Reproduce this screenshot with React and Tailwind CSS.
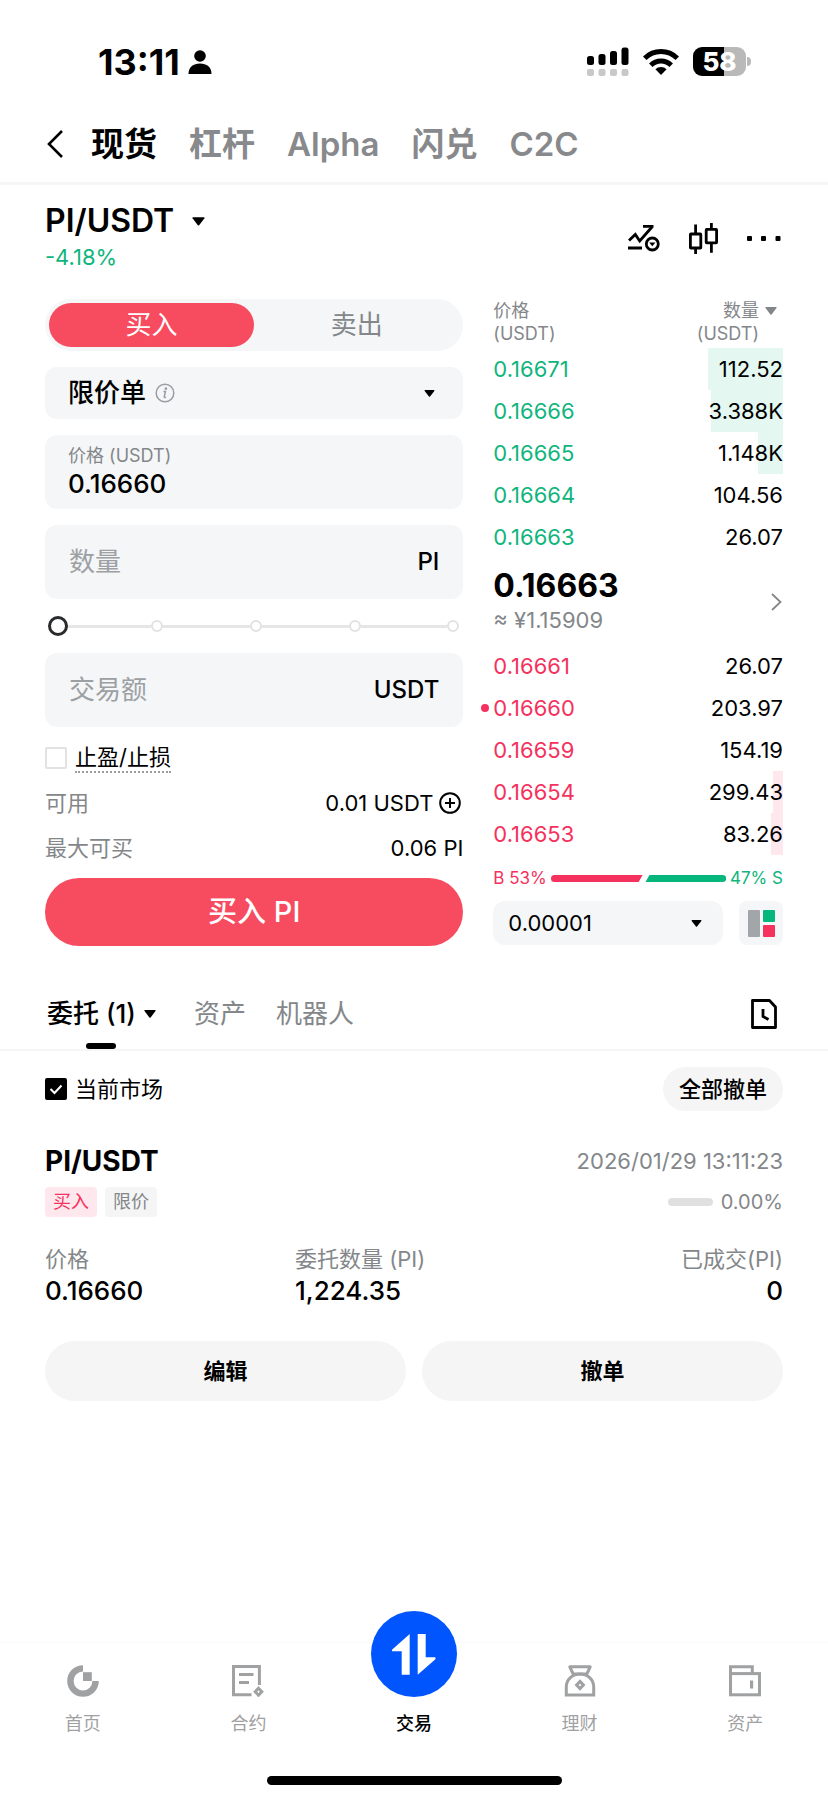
import React, { useState } from "react";

const bids = [
  { price: "0.16671", amount: "112.52", depth: 26 },
  { price: "0.16666", amount: "3.388K", depth: 25 },
  { price: "0.16665", amount: "1.148K", depth: 8.5 },
  { price: "0.16664", amount: "104.56", depth: 0 },
  { price: "0.16663", amount: "26.07", depth: 0 },
];

const asks = [
  { price: "0.16661", amount: "26.07", depth: 0 },
  { price: "0.16660", amount: "203.97", depth: 0, mine: true },
  { price: "0.16659", amount: "154.19", depth: 0 },
  { price: "0.16654", amount: "299.43", depth: 3.5 },
  { price: "0.16653", amount: "83.26", depth: 4 },
];

const Caret = ({ className }) => (
  <svg viewBox="0 0 12 8" className={`shrink-0 ${className}`} fill="currentColor" aria-hidden="true">
    <path d="M1 0h10q1 0.2 0.5 1L6.6 7.4q-0.6 0.7-1.2 0L0.5 1Q0 0.2 1 0z" />
  </svg>
);

const StatusBar = () => (
  <div className="flex h-[105px] items-center justify-between pt-[18px] pr-[77px] pl-[98px]">
    <div className="flex items-center gap-2">
      <span className="text-[36px] leading-none font-bold">13:11</span>
      <svg viewBox="0 0 24 24" className="h-6 w-6" fill="currentColor">
        <circle cx="12" cy="6" r="5.8" />
        <path d="M0.5 24C0.5 17 5.5 13.6 12 13.6S23.5 17 23.5 24z" />
      </svg>
    </div>
    <div className="flex items-center gap-3.5">
      <svg viewBox="0 0 42 30" className="h-[30px] w-[42px]">
        <g fill="#000">
          <rect x="0" y="9" width="7" height="9" rx="2.5" />
          <rect x="11.5" y="7" width="7" height="11" rx="2.5" />
          <rect x="23" y="4" width="7" height="14" rx="2.5" />
          <rect x="34.5" y="0.5" width="7" height="17.5" rx="2.5" />
        </g>
        <g fill="#c8c8c8">
          <rect x="0" y="22" width="7" height="7" rx="2" />
          <rect x="11.5" y="22" width="7" height="7" rx="2" />
          <rect x="23" y="22" width="7" height="7" rx="2" />
          <rect x="34.5" y="22" width="7" height="7" rx="2" />
        </g>
      </svg>
      <svg viewBox="0 0 36 27" className="h-[27px] w-9" fill="none" stroke="#000" strokeWidth="5">
        <path d="M1.7 10.3a23 23 0 0 1 32.6 0" />
        <path d="M7.8 17.2a14.4 14.4 0 0 1 20.4 0" />
        <path d="M18 27l-5.6-5.8a8 8 0 0 1 11.2 0z" fill="#000" stroke="none" />
      </svg>
      <div className="flex items-center gap-px">
        <div className="flex h-[29px] w-[53px] items-center justify-center rounded-[9px] bg-linear-to-r from-black from-58% to-[#b9b9b9] to-58% text-[26px] leading-none font-extrabold text-white">
          58
        </div>
        <div className="h-[9px] w-1 rounded-r-full bg-[#b9b9b9]"></div>
      </div>
    </div>
  </div>
);

const TopTabs = () => {
  const tabs = ["现货", "杠杆", "Alpha", "闪兑", "C2C"];
  return (
    <nav className="flex h-20 items-center border-b-[3px] border-[#f6f6f6] px-[45px]">
      <button aria-label="返回" className="mr-7">
        <svg viewBox="0 0 18 28" className="h-7 w-[18px]" fill="none" stroke="currentColor" strokeWidth="2.6">
          <path d="M17 1L4 14l13 13" />
        </svg>
      </button>
      <div className="flex gap-8">
        {tabs.map((tab, index) => (
          <a
            key={tab}
            href="#"
            className={`text-[33px] leading-10 ${index === 0 ? "font-bold text-black" : "font-semibold text-[#87898c]"}`}
          >
            {tab}
          </a>
        ))}
      </div>
    </nav>
  );
};

const PairHeader = () => (
  <div className="flex items-end justify-between pt-4">
    <div className="flex flex-col gap-0.5">
      <button className="flex items-center gap-[18px] text-[32px] leading-10 font-semibold">
        PI/USDT
        <Caret className="h-[9px] w-[13px]" />
      </button>
      <span className="text-[22px] leading-7 text-[#10b57d]">-4.18%</span>
    </div>
    <div className="mr-px flex h-[66px] items-center gap-[29px]">
      <button aria-label="行情提醒">
        <svg viewBox="0 0 32 28" className="h-7 w-8" fill="none" stroke="currentColor" strokeWidth="2.8">
          <path d="M1 16.5l6.3-6 4.4 6.5L24 3" />
          <path d="M15 2.3h10.5M0 24h14" />
          <circle cx="24.3" cy="20" r="6" />
          <path d="M21.2 18.6h6.2l-3.1 3.6z" fill="currentColor" stroke="none" />
        </svg>
      </button>
      <button aria-label="K线">
        <svg viewBox="0 0 29 31" className="h-[31px] w-[29px]" fill="none" stroke="currentColor" strokeWidth="2.8">
          <rect x="1.4" y="11" width="10.4" height="14" rx="0.5" />
          <path d="M6.6 1.5V11M6.6 25v6" />
          <rect x="17.2" y="6.4" width="10.4" height="13.4" rx="0.5" />
          <path d="M22.4 0v6.4M22.4 19.8v10" />
        </svg>
      </button>
      <button aria-label="更多">
        <svg viewBox="0 0 35 5" className="h-[5px] w-[35px]" fill="currentColor">
          <rect x="0" width="5" height="5" rx="1" />
          <rect x="14" width="5" height="5" rx="1" />
          <rect x="28.5" width="5" height="5" rx="1" />
        </svg>
      </button>
    </div>
  </div>
);

const OrderForm = () => {
  const [price, setPrice] = useState("0.16660");
  const [percent, setPercent] = useState(0);

  return (
    <form className="flex min-w-0 flex-col" onSubmit={(e) => e.preventDefault()}>
      <div className="grid h-[52px] grid-cols-2 rounded-full bg-[#f4f6f8] p-1 text-[26px] leading-8">
        <button type="button" className="rounded-full bg-[#f74b60] text-white">
          买入
        </button>
        <button type="button" className="rounded-full text-[#84878a]">
          卖出
        </button>
      </div>

      <div className="mt-4 flex h-[52px] items-center rounded-xl bg-[#f4f6f8] pr-7 pl-[23px]">
        <select aria-label="委托类型" className="appearance-none bg-transparent text-[26px] leading-8 font-medium">
          <option>限价单</option>
        </select>
        <svg viewBox="0 0 20 20" className="ml-2 h-5 w-5" fill="none" stroke="#9a9c9f" strokeWidth="1.5">
          <circle cx="10" cy="10" r="8.8" />
          <path d="M8.4 8.6h2L9.2 14q0 0.9 1.8 0.2" />
          <circle cx="10.9" cy="5.7" r="0.6" fill="#9a9c9f" />
        </svg>
        <Caret className="ml-auto h-[7px] w-[11px]" />
      </div>

      <label className="mt-4 flex h-[74px] flex-col justify-center rounded-xl bg-[#f4f6f8] px-[23px]">
        <span className="text-[18px] leading-6 text-[#84878a]">价格 (USDT)</span>
        <input
          value={price}
          onChange={(e) => setPrice(e.target.value)}
          className="h-8 w-full bg-transparent text-[26px] leading-8 font-medium outline-none"
        />
      </label>

      <label className="mt-4 flex h-[74px] items-center rounded-xl bg-[#f4f6f8] px-6 text-[24px] leading-8 font-medium">
        <input
          placeholder="数量"
          className="min-w-0 flex-1 bg-transparent text-[26px] font-normal outline-none placeholder:text-[#9da0a3]"
        />
        PI
      </label>

      {/* Amount slider with five stops */}
      <div className="relative flex h-[54px] items-center pl-[3px]">
        <div className="flex flex-1 items-center">
          <span className="relative h-5 w-5 shrink-0 rounded-full border-[3px] border-[#2a2b2d] bg-white"></span>
          {[25, 50, 75, 100].map((stop) => (
            <React.Fragment key={stop}>
              <span className="-mx-1 h-[3px] flex-1 bg-[#e6e6e6]"></span>
              <span className="flex w-5 shrink-0 justify-center">
                <span className="h-3 w-3 rounded-full border-2 border-[#e2e2e2]"></span>
              </span>
            </React.Fragment>
          ))}
        </div>
        <input
          type="range"
          aria-label="数量比例"
          min="0"
          max="100"
          value={percent}
          onChange={(e) => setPercent(Number(e.target.value))}
          className="absolute inset-0 w-full opacity-0"
        />
      </div>

      <label className="flex h-[74px] items-center rounded-xl bg-[#f4f6f8] px-6 text-[24px] leading-8 font-medium">
        <input
          placeholder="交易额"
          className="min-w-0 flex-1 bg-transparent text-[26px] font-normal outline-none placeholder:text-[#9da0a3]"
        />
        USDT
      </label>

      <div className="flex flex-col py-2 text-[22px] leading-7">
        <label className="flex h-[45px] items-center gap-2">
          <input type="checkbox" className="h-[22px] w-[22px] appearance-none rounded-xs border-2 border-[#e2e2e2] bg-white" />
          <span className="border-b-2 border-dotted border-[#9a9c9f]">止盈/止损</span>
        </label>
        <div className="flex h-[45px] items-center justify-between">
          <span className="text-[#84878a]">可用</span>
          <span className="mr-0.5 flex items-center gap-1.5">
            0.01 USDT
            <button type="button" aria-label="充值">
              <svg viewBox="0 0 22 22" className="h-[22px] w-[22px]" fill="none" stroke="currentColor" strokeWidth="2">
                <circle cx="11" cy="11" r="9.8" />
                <path d="M11 6v10M6 11h10" />
              </svg>
            </button>
          </span>
        </div>
        <div className="flex h-[45px] items-center justify-between">
          <span className="text-[#84878a]">最大可买</span>
          <span>0.06 PI</span>
        </div>
      </div>

      <button type="submit" className="h-[68px] rounded-full bg-[#f74b60] text-[29px] leading-9 font-medium text-white">
        买入 PI
      </button>
    </form>
  );
};

const BookRow = ({ row, priceColor, depthColor }) => (
  <tr className="relative h-[42px]">
    <td className={`relative p-0 ${priceColor}`}>
      {row.mine && <span className="absolute top-[17px] -left-3 h-2 w-2 rounded-full bg-[#f5315d]"></span>}
      {row.price}
    </td>
    <td className="p-0 text-right">
      <span className={`absolute inset-y-0 right-0 ${depthColor}`} style={{ width: `${row.depth}%` }}></span>
      <span className="relative">{row.amount}</span>
    </td>
  </tr>
);

const OrderBook = () => (
  <div className="flex min-w-0 flex-col">
    <table className="w-full border-collapse text-[22px] leading-7">
      <thead>
        <tr className="h-[49px] align-top text-[18px] leading-[23px] text-[#84878a]">
          <th className="p-0 text-left font-normal">
            价格
            <br />
            (USDT)
          </th>
          <th className="p-0 font-normal">
            <div className="flex justify-end gap-1.5 pr-1.5 text-right">
              <span>
                数量
                <br />
                (USDT)
              </span>
              <Caret className="mt-2 h-2 w-3" />
            </div>
          </th>
        </tr>
      </thead>
      <tbody>
        {bids.map((row) => (
          <BookRow key={row.price} row={row} priceColor="text-[#10b57d]" depthColor="bg-[#e4f8f1]" />
        ))}
        <tr className="h-[87px]">
          <td colSpan={2} className="p-0">
            <div className="flex items-center justify-between">
              <div>
                <p className="text-[32px] leading-9 font-bold">0.16663</p>
                <p className="text-[22px] leading-8 text-[#84878a]">≈ ¥1.15909</p>
              </div>
              <svg viewBox="0 0 11 18" className="mr-px h-[18px] w-[11px]" fill="none" stroke="#84878a" strokeWidth="1.8">
                <path d="M1 1l8.5 8L1 17" />
              </svg>
            </div>
          </td>
        </tr>
        {asks.map((row) => (
          <BookRow key={row.price} row={row} priceColor="text-[#f5315d]" depthColor="bg-[#fee8ed]" />
        ))}
      </tbody>
    </table>

    <div className="flex h-[46px] items-center gap-1 text-[17px] leading-6">
      <span className="text-[#f5315d]">B 53%</span>
      <svg viewBox="0 0 178 7" preserveAspectRatio="none" className="h-[7px] min-w-0 flex-1">
        <path d="M3.5 0H93l-4 7H3.5a3.5 3.5 0 0 1 0-7z" fill="#f5315d" />
        <path d="M100 0h74.5a3.5 3.5 0 0 1 0 7H96z" fill="#06b77d" />
      </svg>
      <span className="text-[#10b57d]">47% S</span>
    </div>

    <div className="flex gap-4">
      <div className="flex h-11 flex-1 items-center justify-between rounded-xl bg-[#f4f6f8] pr-[21px] pl-[15px]">
        <select aria-label="价格精度" className="appearance-none bg-transparent text-[22px] leading-7">
          <option>0.00001</option>
        </select>
        <Caret className="h-[7px] w-[11px]" />
      </div>
      <button aria-label="盘口样式" className="flex h-11 w-11 items-center justify-center rounded-lg bg-[#f4f6f8]">
        <svg viewBox="0 0 27 27" className="h-[27px] w-[27px]">
          <rect width="12" height="27" rx="1" fill="#a3a6a9" />
          <rect x="15" width="12" height="12" rx="1" fill="#06b77d" />
          <rect x="15" y="15" width="12" height="12" rx="1" fill="#f5315d" />
        </svg>
      </button>
    </div>
  </div>
);

const OrdersTabs = () => (
  <div className="mt-8 flex h-[73px] items-stretch justify-between border-b-2 border-[#f6f6f6] pr-[45px] pl-[47px]">
    <div className="flex items-stretch gap-[38px] text-[26px] leading-8 text-[#84878a]">
      <button className="relative flex items-center gap-2 font-medium text-black">
        委托 (1)
        <Caret className="h-2 w-3" />
        <span className="absolute bottom-0 left-1/2 h-1.5 w-[30px] -translate-x-1/2 rounded-full bg-black"></span>
      </button>
      <button>资产</button>
      <button className="-ml-2">机器人</button>
    </div>
    <button aria-label="历史委托" className="mr-1.5">
      <svg viewBox="0 0 26 30" className="h-[30px] w-[26px]" fill="none" stroke="currentColor" strokeWidth="2.8">
        <path d="M1.5 1.5h17l6 6.5v20.5h-23z" strokeLinejoin="round" />
        <path d="M12 10v7.5l5.5 3" />
      </svg>
    </button>
  </div>
);

const OpenOrder = () => (
  <section className="flex flex-col px-[45px] text-[22px] leading-7">
    <div className="mt-4 flex items-center justify-between">
      <label className="flex items-center gap-2">
        <span className="relative flex">
          <input
            type="checkbox"
            defaultChecked
            className="h-[22px] w-[22px] appearance-none rounded-xs border-2 border-black bg-white checked:bg-black"
          />
          <svg viewBox="0 0 22 22" className="pointer-events-none absolute inset-0" fill="none" stroke="#fff" strokeWidth="2">
            <path d="M5.5 11l4 4 7-7.5" />
          </svg>
        </span>
        当前市场
      </label>
      <button className="h-11 rounded-full bg-[#f5f5f5] px-4 font-medium">全部撤单</button>
    </div>

    <div className="mt-8 flex items-center justify-between">
      <h2 className="text-[28px] leading-9 font-bold">PI/USDT</h2>
      <time className="text-[#84878a]">2026/01/29 13:11:23</time>
    </div>
    <div className="mt-2 flex items-center justify-between">
      <div className="flex gap-2 text-[18px] leading-[30px]">
        <span className="rounded-sm bg-[#fee8ed] px-2 text-[#f5315d]">买入</span>
        <span className="rounded-sm bg-[#f5f5f5] px-2 text-[#84878a]">限价</span>
      </div>
      <div className="flex items-center gap-2 text-[20px] text-[#84878a]">
        <span className="h-2 w-[45px] rounded-sm bg-[#e0e0e0]"></span>
        0.00%
      </div>
    </div>

    <dl className="mt-[26px] grid grid-cols-[250fr_300fr_188fr]">
      <div>
        <dt className="leading-8 text-[#84878a]">价格</dt>
        <dd className="text-[26px] leading-8 font-medium">0.16660</dd>
      </div>
      <div>
        <dt className="leading-8 text-[#84878a]">委托数量 (PI)</dt>
        <dd className="text-[26px] leading-8 font-medium">1,224.35</dd>
      </div>
      <div className="text-right">
        <dt className="leading-8 text-[#84878a]">已成交(PI)</dt>
        <dd className="text-[26px] leading-8 font-medium">0</dd>
      </div>
    </dl>

    <div className="mt-[34px] grid grid-cols-2 gap-4 font-semibold">
      <button className="h-[60px] rounded-full bg-[#f5f5f5]">编辑</button>
      <button className="h-[60px] rounded-full bg-[#f5f5f5]">撤单</button>
    </div>
  </section>
);

const navItems = [
  {
    label: "首页",
    icon: (
      <svg viewBox="0 0 32 32" className="h-8 w-8">
        <path d="M16 3.4A12.6 12.6 0 1 0 28.6 16" fill="none" stroke="currentColor" strokeWidth="6.4" />
        <rect x="16" y="7.2" width="8.8" height="8.8" fill="currentColor" />
      </svg>
    ),
  },
  {
    label: "合约",
    icon: (
      <svg viewBox="0 0 32 32" className="h-8 w-8" fill="none" stroke="currentColor" strokeWidth="3">
        <path d="M27.4 20V1.5H1.5v28.3H19.5" />
        <path d="M7 9.5h14.5M7 17.5h10" />
        <path d="M26.5 23.2l3.3 3.5-3.3 3.5-3.3-3.5z" />
      </svg>
    ),
  },
  { label: "交易", active: true },
  {
    label: "理财",
    icon: (
      <svg viewBox="0 0 32 32" className="h-8 w-8" fill="none" stroke="currentColor" strokeWidth="3">
        <path d="M5.8 1.8h20.4L22.8 9H9.2z" strokeLinejoin="round" />
        <path d="M2.3 30V22C2.3 14.2 8.6 9 16 9s13.7 5.2 13.7 13v8z" />
        <path d="M16 16.4l3.4 3.6-3.4 3.6-3.4-3.6z" />
      </svg>
    ),
  },
  {
    label: "资产",
    icon: (
      <svg viewBox="0 0 32 32" className="h-8 w-8" fill="none" stroke="currentColor" strokeWidth="3">
        <path d="M1.5 9V1.8h21.8V8.6" />
        <rect x="1.5" y="8.6" width="29" height="21.2" />
        <path d="M22.6 15.5v8" strokeWidth="3.2" />
      </svg>
    ),
  },
];

const BottomNav = () => (
  <footer className="mt-auto">
    <nav className="grid grid-cols-5 border-t border-[#fafafa] pt-[22px]">
      {navItems.map((item) => (
        <a
          key={item.label}
          href="#"
          className={`flex flex-col items-center gap-[15px] text-[18px] leading-6 ${
            item.active ? "font-medium text-black" : "text-[#9fa1a3]"
          }`}
        >
          {item.active ? (
            <span className="-mt-[54px] flex h-[86px] w-[86px] items-center justify-center rounded-full bg-[#0055ff]">
              <svg viewBox="0 0 44 41" className="h-[41px] w-11" fill="#fff">
                <path d="M17.7 0v40.7h-8V17.3H0v-1.6z" />
                <path d="M25.7 0h8v23.3h9.7v2L25.7 40.7z" />
              </svg>
            </span>
          ) : (
            item.icon
          )}
          {item.label}
        </a>
      ))}
    </nav>
    <div className="mx-auto mt-10 mb-[15px] h-[9px] w-[295px] rounded-full bg-black"></div>
  </footer>
);

export default function App() {
  return (
    <div className="flex min-h-screen flex-col bg-white font-['Inter','Noto_Sans_CJK_SC',sans-serif] text-black">
      <StatusBar />
      <TopTabs />
      <main className="flex flex-col">
        <div className="px-[45px]">
          <PairHeader />
          <div className="mt-7 grid grid-cols-[13fr_9fr] gap-[30px]">
            <OrderForm />
            <OrderBook />
          </div>
        </div>
        <OrdersTabs />
        <OpenOrder />
      </main>
      <BottomNav />
    </div>
  );
}
